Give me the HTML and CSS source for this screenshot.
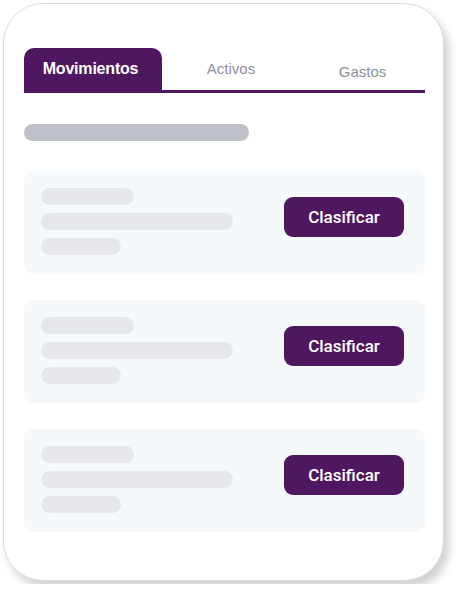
FILE: index.html
```html
<!DOCTYPE html>
<html lang="es">
  <head>
    <meta charset="UTF-8">
    <meta name="viewport" content="width=device-width, initial-scale=1">
    <title>Movimientos</title>
    <link rel="stylesheet" href="styles.css">
  </head>
  <body>
    <main class="phone">
      <nav class="tabs">
        <span class="tab tab--active">Movimientos</span>
        <span class="tab">Activos</span>
        <span class="tab tab--low">Gastos</span>
      </nav>

      <div class="bar bar--title"></div>

      <ul class="list">
        <li class="item">
          <div class="lines">
            <span class="bar bar--short"></span>
            <span class="bar bar--long"></span>
            <span class="bar bar--tiny"></span>
          </div>
          <button class="btn">Clasificar</button>
        </li>
        <li class="item">
          <div class="lines">
            <span class="bar bar--short"></span>
            <span class="bar bar--long"></span>
            <span class="bar bar--tiny"></span>
          </div>
          <button class="btn">Clasificar</button>
        </li>
        <li class="item">
          <div class="lines">
            <span class="bar bar--short"></span>
            <span class="bar bar--long"></span>
            <span class="bar bar--tiny"></span>
          </div>
          <button class="btn">Clasificar</button>
        </li>
      </ul>
    </main>
  </body>
</html>
```

FILE: styles.css
```css
:root {
  --purple: #4e1760;
  --tab-grey: #8d909b;
  --line-grey: #e6e7eb;
  --title-grey: #bdc0c8;
  --item-bg: #f6f9fc;
}

html,
body {
  margin: 0;
  background: #fff;
}

body {
  padding: 3px;
  font-family: "Liberation Sans", Arial, sans-serif;
}

.phone {
  box-sizing: border-box;
  width: 441px;
  height: 578px;
  padding: 44px 18px 0 20px;
  border: 1px solid #dcdcdc;
  border-radius: 40px;
  background: #fff;
  box-shadow: 5px 7px 9px rgba(0, 0, 0, 0.18);
}

.tabs {
  display: grid;
  grid-template-columns: 138px 138px 1fr;
  height: 42px;
  border-bottom: 3px solid var(--purple);
}

.tab {
  display: flex;
  align-items: center;
  justify-content: center;
  font-size: 15px;
  color: var(--tab-grey);
  padding-bottom: 1px;
}

.tab--active {
  background: var(--purple);
  color: #fff;
  font-size: 16px;
  font-weight: bold;
  letter-spacing: -0.2px;
  border-radius: 10px 10px 0 0;
  padding-right: 5px;
  padding-bottom: 0;
}

.tab--low {
  padding-top: 4px;
  padding-bottom: 0;
}

.bar {
  display: block;
  height: 17px;
  border-radius: 9px;
  background: var(--line-grey);
}

.bar--title {
  width: 225px;
  margin-top: 31px;
  background: var(--title-grey);
}

.list {
  list-style: none;
  margin: 30px 0 0;
  padding: 0;
  display: flex;
  flex-direction: column;
  gap: 26px;
}

.item {
  display: flex;
  justify-content: space-between;
  align-items: flex-start;
  height: 103px;
  box-sizing: border-box;
  padding: 17px 21px 19px 17px;
  border-radius: 9px;
  background: var(--item-bg);
}

.lines {
  display: flex;
  flex-direction: column;
  gap: 8px;
}

.bar--short { width: 93px; }
.bar--long { width: 192px; }
.bar--tiny { width: 80px; }

.btn {
  margin-top: 9px;
  width: 120px;
  height: 40px;
  border: 0;
  border-radius: 9px;
  background: var(--purple);
  color: #fff;
  font-family: Roboto, "Liberation Sans", sans-serif;
  font-size: 17px;
  font-weight: 500;
}
```
